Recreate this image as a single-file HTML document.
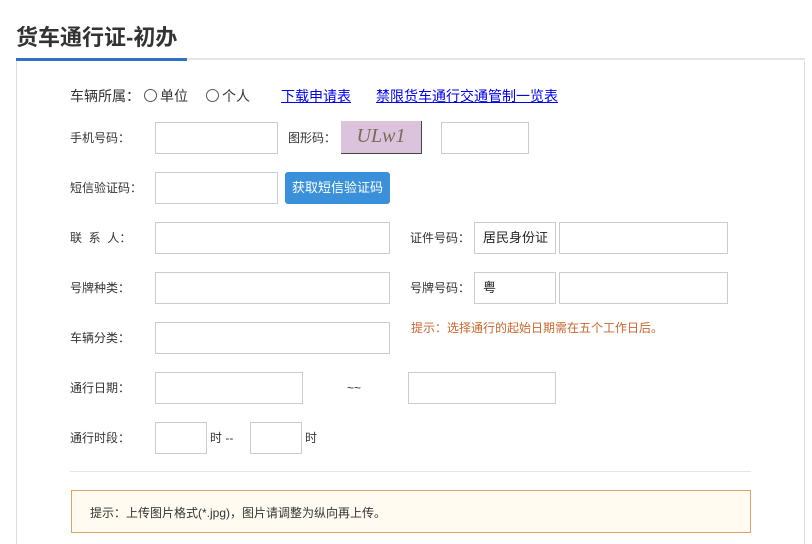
<!DOCTYPE html>
<html><head><meta charset="utf-8"><style>
*{margin:0;padding:0;box-sizing:border-box}
body{width:812px;height:544px;background:#fff;position:relative;overflow:hidden;font-family:"Liberation Sans","Noto Sans CJK SC",sans-serif;color:#333;font-size:12px}
.a{position:absolute;white-space:nowrap}
.in{position:absolute;border:1px solid #ccc;background:#fff}
.l{position:absolute;font-size:12px;color:#333;line-height:14px}
a{color:#0000ee;text-decoration:underline}
.r{position:absolute;width:13px;height:13px;border:1px solid #555;border-radius:50%}
</style></head><body>
<div class="a" style="left:16px;top:24px;font-size:22px;font-weight:bold;color:#333;line-height:28px">货车通行证-初办</div>
<div class="a" style="left:16px;top:58px;width:789px;height:2px;background:#e5e5e5"></div>
<div class="a" style="left:16px;top:58px;width:171px;height:3px;background:#2f72c4"></div>
<div class="a" style="left:16px;top:61px;width:1px;height:483px;background:#ddd"></div>
<div class="a" style="left:804px;top:61px;width:1px;height:483px;background:#ddd"></div>

<div class="a" style="left:70px;top:88px;font-size:14px;line-height:17px">车辆所属：</div>
<div class="r" style="left:144px;top:89px"></div>
<div class="a" style="left:160px;top:88px;font-size:14px;line-height:17px">单位</div>
<div class="r" style="left:206px;top:89px"></div>
<div class="a" style="left:222px;top:88px;font-size:14px;line-height:17px">个人</div>
<div class="a" style="left:281px;top:88px;font-size:14px;line-height:17px"><a>下载申请表</a></div>
<div class="a" style="left:376px;top:88px;font-size:14px;line-height:17px"><a>禁限货车通行交通管制一览表</a></div>

<div class="l" style="left:70px;top:131px">手机号码：</div>
<div class="in" style="left:155px;top:122px;width:123px;height:32px"></div>
<div class="l" style="left:288px;top:131px">图形码：</div>
<div class="a" style="left:341px;top:121px;width:81px;height:33px;background:#dcc3dc;border:1px solid #444;border-width:0 1px 1px 0;font-family:'Liberation Serif',serif;font-style:italic;font-size:20px;color:#7a6a5a;text-align:center;line-height:31px">ULw1</div>
<div class="in" style="left:441px;top:122px;width:88px;height:32px"></div>

<div class="l" style="left:70px;top:181px">短信验证码：</div>
<div class="in" style="left:155px;top:172px;width:123px;height:32px"></div>
<div class="a" style="left:285px;top:172px;width:105px;height:32px;background:#3b91d9;border-radius:3px;color:#fff;font-size:13px;text-align:center;line-height:32px">获取短信验证码</div>

<div class="l" style="left:70px;top:231px">联&nbsp;&nbsp;系&nbsp;&nbsp;人：</div>
<div class="in" style="left:155px;top:222px;width:235px;height:32px"></div>
<div class="l" style="left:410px;top:231px">证件号码：</div>
<div class="in" style="left:474px;top:222px;width:82px;height:32px;font-size:13px;line-height:30px;padding-left:8px;color:#222">居民身份证</div>
<div class="in" style="left:559px;top:222px;width:169px;height:32px"></div>

<div class="l" style="left:70px;top:281px">号牌种类：</div>
<div class="in" style="left:155px;top:272px;width:235px;height:32px"></div>
<div class="l" style="left:410px;top:281px">号牌号码：</div>
<div class="in" style="left:474px;top:272px;width:82px;height:32px;font-size:13px;line-height:30px;padding-left:8px;color:#222">粤</div>
<div class="in" style="left:559px;top:272px;width:169px;height:32px"></div>

<div class="l" style="left:70px;top:331px">车辆分类：</div>
<div class="in" style="left:155px;top:322px;width:235px;height:32px"></div>
<div class="l" style="left:411px;top:321px;color:#c8662e">提示：选择通行的起始日期需在五个工作日后。</div>

<div class="l" style="left:70px;top:381px">通行日期：</div>
<div class="in" style="left:155px;top:372px;width:148px;height:32px"></div>
<div class="l" style="left:347px;top:381px">~~</div>
<div class="in" style="left:408px;top:372px;width:148px;height:32px"></div>

<div class="l" style="left:70px;top:431px">通行时段：</div>
<div class="in" style="left:155px;top:422px;width:52px;height:32px"></div>
<div class="l" style="left:210px;top:431px">时 --</div>
<div class="in" style="left:250px;top:422px;width:52px;height:32px"></div>
<div class="l" style="left:305px;top:431px">时</div>

<div class="a" style="left:70px;top:471px;width:681px;height:1px;background:#e5e5e5"></div>
<div class="a" style="left:71px;top:490px;width:680px;height:43px;background:#fffbf0;border:1px solid #e0a060"></div>
<div class="l" style="left:90px;top:506px">提示：上传图片格式(*.jpg)，图片请调整为纵向再上传。</div>
</body></html>
